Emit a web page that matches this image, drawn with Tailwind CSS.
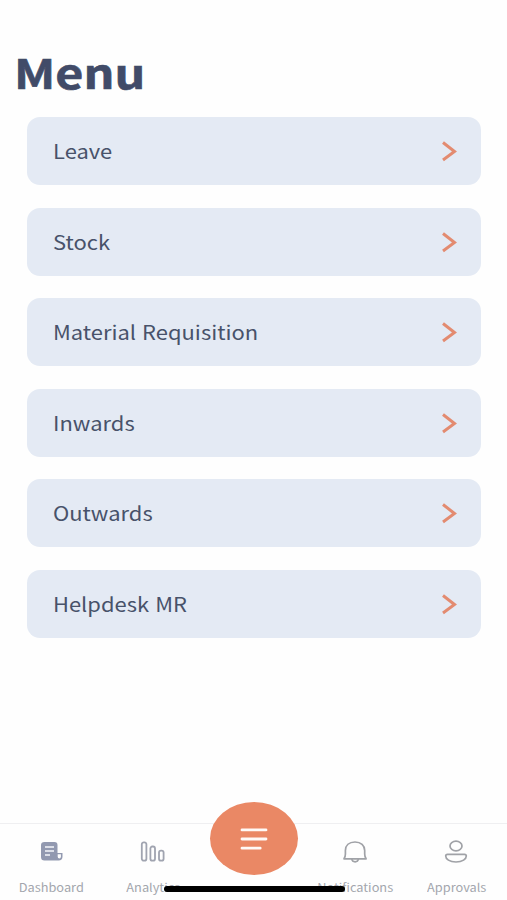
<!DOCTYPE html>
<html lang="en">
<head>
<meta charset="utf-8">
<title>Menu</title>
<script src="https://cdn.jsdelivr.net/npm/@tailwindcss/browser@4"></script>
</head>
<body class="bg-white">
<div class="relative flex h-[900px] w-[507px] flex-col overflow-hidden bg-[#fefefe] font-['Noto_Sans_CJK_SC','Noto_Sans',sans-serif] text-[#48526a]">
  <h1 class="mt-[41px] h-[60px] pl-[13.5px] text-[41px] leading-[60px] font-bold text-[#414b68] [-webkit-text-stroke:0.6px_#414b68]"><span class="inline-block origin-left scale-x-[1.18]">Menu</span></h1>
  <main class="mt-[16px] mr-[26px] ml-[26.5px] flex flex-1 flex-col gap-[22.6px] text-[19.5px] leading-[28px] [word-spacing:1px]">
    <a class="flex h-[68px] items-center justify-between rounded-[13px] bg-[#e4eaf4] pr-[24px] pl-[26px]"><span class="origin-left scale-x-[1.125]">Leave</span><svg class="h-[22px] w-[16px]" viewBox="0 0 16 22" fill="none" stroke="#e38b70" stroke-width="3"><path d="M2 2.5 13.5 11.500 2 20"/></svg></a>
    <a class="flex h-[68px] items-center justify-between rounded-[13px] bg-[#e4eaf4] pr-[24px] pl-[26px]"><span class="origin-left scale-x-[1.125]">Stock</span><svg class="h-[22px] w-[16px]" viewBox="0 0 16 22" fill="none" stroke="#e38b70" stroke-width="3"><path d="M2 2.5 13.5 11.500 2 20"/></svg></a>
    <a class="flex h-[68px] items-center justify-between rounded-[13px] bg-[#e4eaf4] pr-[24px] pl-[26px]"><span class="origin-left scale-x-[1.125]">Material Requisition</span><svg class="h-[22px] w-[16px]" viewBox="0 0 16 22" fill="none" stroke="#e38b70" stroke-width="3"><path d="M2 2.5 13.5 11.500 2 20"/></svg></a>
    <a class="flex h-[68px] items-center justify-between rounded-[13px] bg-[#e4eaf4] pr-[24px] pl-[26px]"><span class="origin-left scale-x-[1.125]">Inwards</span><svg class="h-[22px] w-[16px]" viewBox="0 0 16 22" fill="none" stroke="#e38b70" stroke-width="3"><path d="M2 2.5 13.5 11.500 2 20"/></svg></a>
    <a class="flex h-[68px] items-center justify-between rounded-[13px] bg-[#e4eaf4] pr-[24px] pl-[26px]"><span class="origin-left scale-x-[1.125]">Outwards</span><svg class="h-[22px] w-[16px]" viewBox="0 0 16 22" fill="none" stroke="#e38b70" stroke-width="3"><path d="M2 2.5 13.5 11.500 2 20"/></svg></a>
    <a class="flex h-[68px] items-center justify-between rounded-[13px] bg-[#e4eaf4] pr-[24px] pl-[26px]"><span class="origin-left scale-x-[1.125]">Helpdesk MR</span><svg class="h-[22px] w-[16px]" viewBox="0 0 16 22" fill="none" stroke="#e38b70" stroke-width="3"><path d="M2 2.5 13.5 11.500 2 20"/></svg></a>
  </main>
  <nav class="grid h-[77px] grid-cols-5 border-t border-[#efeff1] pl-[1px] text-[11.5px] leading-[16px] text-[#a3a6ad]">
    <div class="flex flex-col items-center pt-[16px]">
      <svg class="h-[24px] w-[26px]" viewBox="0 0 26 24"><path d="M5.500 2H15.500Q18.500 2 18.500 5V13H23.500V16.500Q23.500 20.500 19.500 20.500H5.500Q2 20.500 2 17V5Q2 2 5.500 2Z" fill="#9299b0"/><path d="M6 7h9M6 11h9M6 15h5" stroke="#f5f6fa" stroke-width="1.500"/><path d="M18.700 14.300h3.200v2.200q0 2-1.600 2t-1.600-2Z" fill="#fefefe"/></svg>
      <span class="mt-[15px] scale-x-[1.11]">Dashboard</span>
    </div>
    <div class="flex flex-col items-center pt-[16px]">
      <svg class="h-[24px] w-[26px]" viewBox="0 0 26 24" fill="none" stroke="#a0a4b0" stroke-width="1.800"><rect x="1.800" y="2.300" width="4.600" height="18.400" rx="2"/><rect x="10.400" y="6.500" width="4.600" height="14.200" rx="2"/><rect x="19" y="10.600" width="4.600" height="10.100" rx="2"/></svg>
      <span class="mt-[15px] scale-x-[1.11]">Analytics</span>
    </div>
    <div></div>
    <div class="flex flex-col items-center pt-[16px]">
      <svg class="h-[24px] w-[26px]" viewBox="0 0 26 24" fill="none" stroke="#a0a2a7" stroke-width="1.700" stroke-linejoin="round"><path d="M2 18.800Q3.400 17 3.400 14V10.500C3.400 5.500 7 2 13 2S22.700 5.500 22.700 10.500V14Q22.700 17 24.100 18.800Z"/><path d="M9.800 19q.4 2.800 3.300 2.800t3.300-2.800"/></svg>
      <span class="mt-[15px] scale-x-[1.11]">Notifications</span>
    </div>
    <div class="flex flex-col items-center pt-[16px]">
      <svg class="h-[24px] w-[26px]" viewBox="0 0 26 24" fill="none" stroke="#a0a2a7" stroke-width="1.700"><ellipse cx="13" cy="6" rx="6" ry="4.800"/><path d="M4.500 14.300H21.500Q23.300 14.300 23.300 16C23.300 19 19.500 22 13 22S2.700 19 2.700 16Q2.700 14.300 4.500 14.300Z"/></svg>
      <span class="mt-[15px] scale-x-[1.11]">Approvals</span>
    </div>
  </nav>
  <button class="absolute top-[802px] left-[210px] flex h-[73px] w-[88px] items-center justify-center rounded-[50%] bg-[#ea8865]">
    <svg class="h-[24px] w-[28px]" viewBox="0 0 28 24" fill="none" stroke="#fffaf7" stroke-width="2.800" stroke-linecap="round"><path d="M2 2.900H26M2 12H26M2 21.200H20.200"/></svg>
  </button>
  <div class="absolute top-[886px] left-[164px] h-[6px] w-[181px] rounded-full bg-black"></div>
</div>
</body>
</html>
